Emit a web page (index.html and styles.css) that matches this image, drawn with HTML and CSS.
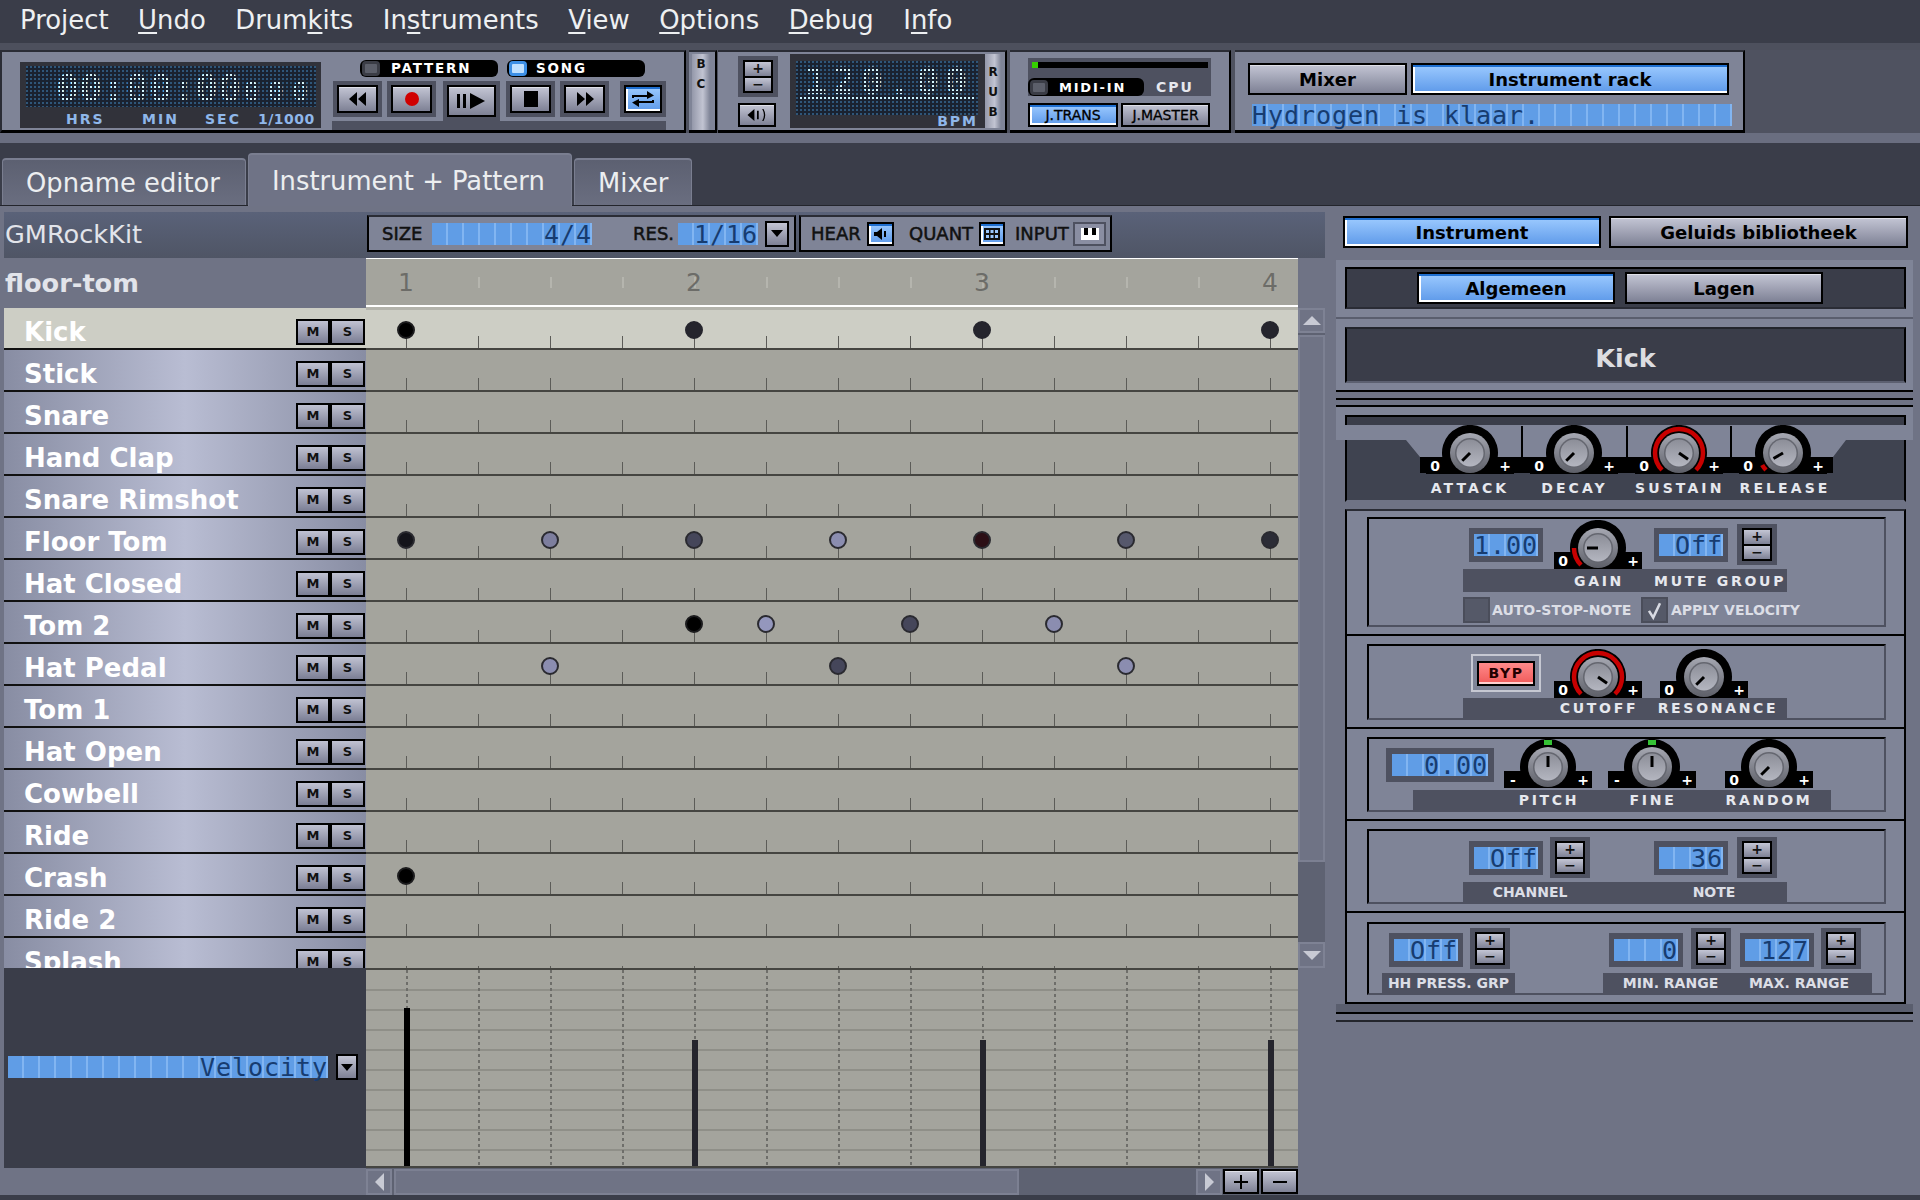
FILE: index.html
```html
<!DOCTYPE html>
<html lang="nl">
<head>
<meta charset="utf-8">
<title>Hydrogen</title>
<link rel="stylesheet" href="styles.css">
</head>
<body>
<svg class="defs" aria-hidden="true">
  <defs>
    <linearGradient id="kg1" x1="0" y1="0" x2="0" y2="1"><stop offset="0" stop-color="#a6a8b2"/><stop offset="1" stop-color="#5d5f68"/></linearGradient>
    <linearGradient id="kg2" x1="0" y1="0" x2="0" y2="1"><stop offset="0" stop-color="#8c8e98"/><stop offset="1" stop-color="#b4b6c0"/></linearGradient>
    <symbol id="kb" viewBox="0 0 88 49">
      <path d="M0 32H16.3A28 28 0 1 1 71.7 32H88V49H0Z" fill="#000"/>
      <circle cx="44" cy="28" r="20" fill="url(#kg1)"/>
      <circle cx="44" cy="28" r="15" fill="#64666f"/>
      <circle cx="44" cy="28" r="13.5" fill="url(#kg2)"/>
    </symbol>
  </defs>
</svg>

<nav class="menu">
  <span>Project</span><span><u>U</u>ndo</span><span>Drum<u>k</u>its</span><span>In<u>s</u>truments</span><span><u>V</u>iew</span><span><u>O</u>ptions</span><span><u>D</u>ebug</span><span>I<u>n</u>fo</span>
</nav>
<div class="menu-band"></div>

<header class="toolbar">
  <section class="tb tb-time">
    <div class="timelcd">
      <div class="dots timedots"><span class="bigd">00:00:00</span><span class="smalld">000</span></div>
      <div class="timelabels"><span class="t1">HRS</span><span class="t2">MIN</span><span class="t3">SEC</span><span class="t4">1/1000</span></div>
    </div>
    <div class="transport">
      <div class="pills">
        <div class="pill"><i class="led"></i><span class="pilltxt">PATTERN</span></div>
        <div class="pill"><i class="led on"></i><span class="pilltxt p-song">SONG</span></div>
      </div>
      <div class="tbtns">
        <div class="tw"><div class="btn tb41"><svg viewBox="0 0 24 20" class="ti"><path d="M11 3V17L3 10ZM20 3V17L12 10Z"/></svg></div></div>
        <div class="tw"><div class="btn tb41"><svg viewBox="0 0 24 20" class="ti"><ellipse cx="12" cy="10" rx="7" ry="7" fill="#d00000"/></svg></div></div>
        <div class="tw tw-play"><div class="btn tb49"><svg viewBox="0 0 36 20" class="ti ti36"><path d="M3 3H6V17H3ZM9 3H12V17H9ZM16 2V18L31 10Z"/></svg></div></div>
        <div class="tw"><div class="btn tb41"><svg viewBox="0 0 24 20" class="ti"><path d="M5 2H19V18H5Z"/></svg></div></div>
        <div class="tw"><div class="btn tb41"><svg viewBox="0 0 24 20" class="ti"><path d="M4 3V17L12 10ZM13 3V17L21 10Z"/></svg></div></div>
        <div class="tw tw-loop"><div class="btn on tb38"><svg viewBox="0 0 28 22" class="ti ti28"><path d="M3 10V7H18V3L25 7.500 18 11V9H5V10ZM25 12V15H10V19L3 14.500 10 11V13H23V12Z"/></svg></div></div>
      </div>
      <div class="tbar"></div>
    </div>
  </section>
  <section class="tb strip-bc"><div class="vstrip"><span>B</span><span>C</span></div></section>
  <section class="tb tb-tempo">
    <div class="tempo-ctl">
      <div class="spin spin-t"><b>+</b><b>−</b></div>
      <div class="btn spk"><svg viewBox="0 0 30 20" class="ti ti28"><path d="M4 10L12 3V17ZM15 5V15H17V5ZM21 3Q25 10 21 17L22.500 17Q26.500 10 22.500 3Z"/></svg></div>
    </div>
    <div class="bpmlcd">
      <div class="dots bpmdots"><span class="bpmtxt">120.00</span><i class="dotline"></i></div>
      <div class="bpmlab">BPM</div>
    </div>
    <div class="vstrip rub"><span>R</span><span>U</span><span>B</span></div>
  </section>
  <section class="tb tb-midi">
    <div class="cpubox">
      <div class="cpubar"><i></i></div>
      <div class="midirow"><div class="pill midipill"><i class="led"></i><span class="pilltxt">MIDI-IN</span></div><span class="cputxt">CPU</span></div>
    </div>
    <div class="jrow"><div class="btn on jb1">J.TRANS</div><div class="btn jb2">J.MASTER</div></div>
  </section>
  <section class="tb tb-mon">
    <div class="monbtns"><div class="btn bt mixb">Mixer</div><div class="btn on bt rackb">Instrument rack</div></div>
    <div class="lcd l480">Hydrogen is klaar.</div>
  </section>
</header>
<div class="tool-band"></div>
<div class="tool-gap"></div>

<div class="tabs">
  <div class="tab t-a">Opname editor</div>
  <div class="tab act t-b">Instrument + Pattern</div>
  <div class="tab t-c">Mixer</div>
</div>

<main class="main">
  <div class="editor">
    <div class="kitname">GMRockKit</div>
    <div class="ptb">
      <div class="ptp ptp1">
        <span class="pl w42 ml15">SIZE</span><div class="lcd l160 r ml8">4/4</div>
        <span class="pl w42 ml41">RES.</span><div class="lcd l80 r ml3">1/16</div>
        <div class="drop ml7"><i></i></div>
      </div>
      <div class="ptp ptp2">
        <span class="pl w49 ml12">HEAR</span>
        <div class="btn on ib w27 ml7"><svg viewBox="0 0 20 16"><path d="M3 6H6L11 2V14L6 10H3ZM13 5V11H15V5Z"/></svg></div>
        <span class="pl w65 ml15">QUANT</span>
        <div class="btn on ib w26 ml5"><svg viewBox="0 0 20 16"><path d="M2 2H18V14H2Z"/><path d="M4 4H7V7H4ZM8.500 4H11.500V7H8.500ZM13 4H16V7H13ZM4 9H7V12H4ZM8.500 9H11.500V12H8.500ZM13 9H16V12H13Z"/></svg></div>
        <span class="pl w53 ml10">INPUT</span>
        <div class="inp ml5"><svg viewBox="0 0 24 16"><path d="M3 2H21V14H3Z" fill="#fff"/><path d="M6 2H10V9H6ZM14 2H18V9H14Z" fill="#000"/></svg></div>
      </div>
    </div>

    <div class="sel-name">floor-tom</div>
    <div class="ruler gcols">
      <span class="c0">1</span><span class="c4">2</span><span class="c8">3</span><span class="c12">4</span>
    </div>
    <div class="ruler-end"></div>

    <div class="ilist">
      <div class="irow sel"><span class="iname">Kick</span><span class="ms">M</span><span class="ms">S</span></div>
      <div class="irow"><span class="iname">Stick</span><span class="ms">M</span><span class="ms">S</span></div>
      <div class="irow"><span class="iname">Snare</span><span class="ms">M</span><span class="ms">S</span></div>
      <div class="irow"><span class="iname">Hand Clap</span><span class="ms">M</span><span class="ms">S</span></div>
      <div class="irow"><span class="iname">Snare Rimshot</span><span class="ms">M</span><span class="ms">S</span></div>
      <div class="irow"><span class="iname">Floor Tom</span><span class="ms">M</span><span class="ms">S</span></div>
      <div class="irow"><span class="iname">Hat Closed</span><span class="ms">M</span><span class="ms">S</span></div>
      <div class="irow"><span class="iname">Tom 2</span><span class="ms">M</span><span class="ms">S</span></div>
      <div class="irow"><span class="iname">Hat Pedal</span><span class="ms">M</span><span class="ms">S</span></div>
      <div class="irow"><span class="iname">Tom 1</span><span class="ms">M</span><span class="ms">S</span></div>
      <div class="irow"><span class="iname">Hat Open</span><span class="ms">M</span><span class="ms">S</span></div>
      <div class="irow"><span class="iname">Cowbell</span><span class="ms">M</span><span class="ms">S</span></div>
      <div class="irow"><span class="iname">Ride</span><span class="ms">M</span><span class="ms">S</span></div>
      <div class="irow"><span class="iname">Crash</span><span class="ms">M</span><span class="ms">S</span></div>
      <div class="irow"><span class="iname">Ride 2</span><span class="ms">M</span><span class="ms">S</span></div>
      <div class="irow"><span class="iname">Splash</span><span class="ms">M</span><span class="ms">S</span></div>
    </div>

    <div class="pgrid">
      <div class="grow gcols sel"><i class="note k0 c0"></i><i class="note k1 c4"></i><i class="note k1 c8"></i><i class="note k1 c12"></i></div>
      <div class="grow gcols"></div>
      <div class="grow gcols"></div>
      <div class="grow gcols"></div>
      <div class="grow gcols"></div>
      <div class="grow gcols"><i class="note k2 c0"></i><i class="note k5 c2"></i><i class="note k4 c4"></i><i class="note k6 c6"></i><i class="note k7 c8"></i><i class="note k8 c10"></i><i class="note k3 c12"></i></div>
      <div class="grow gcols"></div>
      <div class="grow gcols"><i class="note k0 c4"></i><i class="note k9 c5"></i><i class="note k4 c7"></i><i class="note k6 c9"></i></div>
      <div class="grow gcols"><i class="note k6 c2"></i><i class="note k4 c6"></i><i class="note k6 c10"></i></div>
      <div class="grow gcols"></div>
      <div class="grow gcols"></div>
      <div class="grow gcols"></div>
      <div class="grow gcols"></div>
      <div class="grow gcols"><i class="note k0 c0"></i></div>
      <div class="grow gcols"></div>
      <div class="grow gcols"></div>
    </div>

    <div class="vscroll">
      <div class="sb-btn"><i class="tri up"></i></div>
      <div class="sb-thumb vt"></div>
      <div class="sb-track vtr"></div>
      <div class="sb-btn"><i class="tri down"></i></div>
    </div>

    <div class="velleft">
      <div class="lcd l320 r">Velocity</div>
      <div class="drop ml8 velr"><i></i></div>
    </div>
    <div class="velgrid gcols">
      <i class="vcol c0"><b class="bar hi black"></b></i><i class="vcol c1"></i><i class="vcol c2"></i><i class="vcol c3"></i>
      <i class="vcol c4"><b class="bar"></b></i><i class="vcol c5"></i><i class="vcol c6"></i><i class="vcol c7"></i>
      <i class="vcol c8"><b class="bar"></b></i><i class="vcol c9"></i><i class="vcol c10"></i><i class="vcol c11"></i>
      <i class="vcol c12"><b class="bar"></b></i>
    </div>
    <div></div>

    <div></div>
    <div class="hscroll">
      <div class="sb-btn hb"><i class="tri t-left"></i></div>
      <div class="sb-thumb ht"></div>
      <div class="sb-track htr"></div>
      <div class="sb-btn hb hb-r"><i class="tri t-right"></i></div>
      <div class="btn zoomb z1"><svg viewBox="0 0 20 20"><path d="M9 3H11V9H17V11H11V17H9V11H3V9H9Z"/></svg></div>
      <div class="btn zoomb z2"><svg viewBox="0 0 20 20"><path d="M3 9H17V11H3Z"/></svg></div>
    </div>
  </div>

  <aside class="rcol">
    <div class="rbtns"><div class="btn on bt ib258">Instrument</div><div class="btn bt ib299">Geluids bibliotheek</div></div>
    <div class="rack">
      <div class="rhead"><div class="rhead-in"><div class="btn on bt ib197">Algemeen</div><div class="btn bt ib198">Lagen</div></div></div>
      <div class="rname"><div class="rname-in">Kick</div></div>
      <div class="rrule"></div>
      <div class="env">
        <div class="env-top"></div>
        <div class="env-body">
          <div class="env-knobs">
            <svg class="knob" viewBox="0 0 88 49"><use href="#kb"/><line class="ptr" x1="44" y1="28" x2="44" y2="17" transform="rotate(-135 44 28)"/><text class="kl" x="9" y="46">0</text><text class="kl" x="79" y="46">+</text></svg>
            <i class="envsep"></i>
            <svg class="knob" viewBox="0 0 88 49"><use href="#kb"/><line class="ptr" x1="44" y1="28" x2="44" y2="17" transform="rotate(-135 44 28)"/><text class="kl" x="9" y="46">0</text><text class="kl" x="79" y="46">+</text></svg>
            <i class="envsep s2"></i>
            <svg class="knob" viewBox="0 0 88 49"><use href="#kb"/><path class="arc" d="M27 45A24 24 0 1 1 61 45"/><line class="ptr" x1="44" y1="28" x2="44" y2="17" transform="rotate(125 44 28)"/><text class="kl" x="9" y="46">0</text><text class="kl" x="79" y="46">+</text></svg>
            <i class="envsep"></i>
            <svg class="knob" viewBox="0 0 88 49"><use href="#kb"/><path class="arc" d="M27 45A24 24 0 0 1 23.200 40"/><line class="ptr" x1="44" y1="28" x2="44" y2="17" transform="rotate(-120 44 28)"/><text class="kl" x="9" y="46">0</text><text class="kl" x="79" y="46">+</text></svg>
          </div>
          <div class="env-labels"><span class="px">ATTACK</span><span class="px">DECAY</span><span class="px">SUSTAIN</span><span class="px">RELEASE</span></div>
        </div>
      </div>
      <div class="racks">
        <div class="rp rp1"><div class="ri ri1">
          <div class="prow mt1">
            <div class="lb l-s ml100 mt8"><div class="lcd l64 r">1.00</div></div>
            <svg class="knob ml11" viewBox="0 0 88 49"><use href="#kb"/><path class="arc" d="M27 45A24 24 0 0 1 20 28"/><line class="ptr" x1="44" y1="28" x2="44" y2="17" transform="rotate(-90 44 28)"/><text class="kl" x="9" y="46">0</text><text class="kl" x="79" y="46">+</text></svg>
            <div class="lb l-s ml12 mt8"><div class="lcd l64 r">Off</div></div>
            <div class="spin ml9 mt4"><b>+</b><b>−</b></div>
          </div>
          <div class="lbar ml94 w324 h23 pl81"><span class="px w110">GAIN</span><span class="px w128">MUTE GROUP</span></div>
          <div class="chk">
            <i class="cb ml94"></i><span class="st w151">AUTO-STOP-NOTE</span>
            <i class="cb"><svg viewBox="0 0 27 26"><path d="M7 14L12 22L20 5" fill="none" stroke="#d8dae2" stroke-width="3"/></svg></i><span class="st ml3">APPLY VELOCITY</span>
          </div>
        </div></div>

        <div class="rp rp2"><div class="ri ri2">
          <div class="prow">
            <div class="byp ml102 mt8"><span>BYP</span></div>
            <svg class="knob ml13 mt3" viewBox="0 0 88 49"><use href="#kb"/><path class="arc" d="M27 45A24 24 0 1 1 61 45"/><line class="ptr" x1="44" y1="28" x2="44" y2="17" transform="rotate(125 44 28)"/><text class="kl" x="9" y="46">0</text><text class="kl" x="79" y="46">+</text></svg>
            <svg class="knob ml18 mt3" viewBox="0 0 88 49"><use href="#kb"/><line class="ptr" x1="44" y1="28" x2="44" y2="17" transform="rotate(-135 44 28)"/><text class="kl" x="9" y="46">0</text><text class="kl" x="79" y="46">+</text></svg>
          </div>
          <div class="lbar ml94 w324 h20 pl81"><span class="px w110">CUTOFF</span><span class="px w128">RESONANCE</span></div>
        </div></div>

        <div class="rp rp3"><div class="ri ri3">
          <div class="prow p49">
            <div class="lb l-w ml17 mt9"><div class="lcd l96 r">0.00</div></div>
            <svg class="knob ml10" viewBox="0 0 88 49"><use href="#kb"/><rect x="40" y="1" width="8" height="5" fill="#35c235"/><line class="ptr" x1="44" y1="28" x2="44" y2="17"/><text class="kl" x="9" y="46">-</text><text class="kl" x="79" y="46">+</text></svg>
            <svg class="knob ml16" viewBox="0 0 88 49"><use href="#kb"/><rect x="40" y="1" width="8" height="5" fill="#35c235"/><line class="ptr" x1="44" y1="28" x2="44" y2="17"/><text class="kl" x="9" y="46">-</text><text class="kl" x="79" y="46">+</text></svg>
            <svg class="knob ml29" viewBox="0 0 88 49"><use href="#kb"/><line class="ptr" x1="44" y1="28" x2="44" y2="17" transform="rotate(-135 44 28)"/><text class="kl" x="9" y="46">0</text><text class="kl" x="79" y="46">+</text></svg>
          </div>
          <div class="lbar ml44 w418 h20 mt2 pl84"><span class="px w104">PITCH</span><span class="px w104">FINE</span><span class="px w120 ml4">RANDOM</span></div>
        </div></div>

        <div class="rp rp4"><div class="ri ri4">
          <div class="prow p46">
            <div class="lb l-s ml100 mt10"><div class="lcd l64 r">Off</div></div>
            <div class="spin ml7 mt6"><b>+</b><b>−</b></div>
            <div class="lb l-s ml64 mt10"><div class="lcd l64 r">36</div></div>
            <div class="spin ml9 mt6"><b>+</b><b>−</b></div>
          </div>
          <div class="lbar ml94 w324 h20 mt5"><span class="st w134 tc">CHANNEL</span><span class="st w148 ml43 tc">NOTE</span></div>
        </div></div>

        <div class="rp rp5"><div class="ri ri5">
          <div class="prow p45">
            <div class="lb l-s ml20 mt9"><div class="lcd l64 r">Off</div></div>
            <div class="spin ml7 mt4"><b>+</b><b>−</b></div>
            <div class="lb l-s ml99 mt9"><div class="lcd l64 r">0</div></div>
            <div class="spin ml8 mt4"><b>+</b><b>−</b></div>
            <div class="lb l-s ml9 mt9"><div class="lcd l64 r">127</div></div>
            <div class="spin ml7 mt4"><b>+</b><b>−</b></div>
          </div>
          <div class="barrow mt4">
            <div class="lbar ml13 w133 h20"><span class="st w133 tc">HH PRESS. GRP</span></div>
            <div class="lbar ml88 w269 h20"><span class="st w135 tc">MIN. RANGE</span><span class="st w122 tc">MAX. RANGE</span></div>
          </div>
        </div></div>
      </div>
      <div class="rfoot"></div>
    </div>
  </aside>
</main>
<div class="bottom"></div>
</body>
</html>
```

FILE: styles.css
```css
* { box-sizing: border-box; }
html, body { margin: 0; padding: 0; }
body { width: 1920px; height: 1200px; overflow: hidden; background: #3a3d49; font-family: "DejaVu Sans", sans-serif; color: #111; display: flex; flex-direction: column; }
i, b { font-style: normal; display: block; }
.defs { display: block; width: 0; height: 0; flex: none; }

/* margins */
.ml3{margin-left:3px}.ml4{margin-left:4px}.ml5{margin-left:5px}.ml7{margin-left:7px}.ml8{margin-left:8px}.ml9{margin-left:9px}.ml10{margin-left:10px}.ml11{margin-left:11px}.ml12{margin-left:12px}.ml13{margin-left:13px}.ml15{margin-left:15px}.ml16{margin-left:16px}.ml17{margin-left:17px}.ml18{margin-left:18px}.ml20{margin-left:20px}.ml29{margin-left:29px}.ml41{margin-left:41px}.ml43{margin-left:43px}.ml44{margin-left:44px}.ml64{margin-left:64px}.ml88{margin-left:88px}.ml94{margin-left:94px}.ml99{margin-left:99px}.ml100{margin-left:100px}.ml102{margin-left:102px}
.mt1{margin-top:1px}.mt2{margin-top:2px}.mt3{margin-top:3px}.mt4{margin-top:4px}.mt5{margin-top:5px}.mt6{margin-top:6px}.mt8{margin-top:8px}.mt9{margin-top:9px}.mt10{margin-top:10px}
.w26{width:26px}.w27{width:27px}.w42{width:42px}.w49{width:49px}.w53{width:53px}.w65{width:65px}.w104{width:104px}.w110{width:110px}.w120{width:120px}.w122{width:122px}.w128{width:128px}.w133{width:133px}.w134{width:134px}.w135{width:135px}.w148{width:148px}.w151{width:151px}.w269{width:269px}.w324{width:324px}.w418{width:418px}
.h20{height:20px}.h23{height:23px}.tc{text-align:center}

/* menu */
.menu { height: 43px; flex: none; display: flex; align-items: center; padding: 0 0 3px 20px; background: #3a3d49; color: #eef0f2; font-size: 25.900px; gap: 29.500px; }
.menu u { text-decoration-thickness: 2px; text-underline-offset: 3px; }
.menu-band { height: 7px; flex: none; background: #4d505d; }

/* toolbar */
.toolbar { height: 83px; flex: none; display: flex; background: #4f5260; }
.tb { background: #7f8497; border-top: 2px solid #2a2c35; border-bottom: 3px solid #000; border-right: 2px solid #000; height: 83px; display: flex; }
.tool-band { height: 10px; flex: none; background: #6a6e80; }
.tool-gap { height: 10px; flex: none; background: #3a3d49; }
.tb-time { width: 686px; padding: 10px 0 0 20px; border-left: 2px solid #2a2c35; padding-left: 18px; }
.timelcd { width: 301px; height: 66px; background: #31323a; padding: 4px 5px 0 6px; flex: none; }
.dots { position: relative; background: #2f5679; color: #d4f6ff; font-family: "DejaVu Sans Mono", monospace; font-weight: bold; }
.dots::after { content: ""; position: absolute; inset: 0; background-image: linear-gradient(90deg, transparent 0 2px, #1a2230 2px 4px), linear-gradient(transparent 0 2px, #1a2230 2px 4px); background-size: 4px 4px; }
.timedots { height: 41px; width: 290px; padding: 3px 0 0 30px; display: flex; align-items: baseline; line-height: 38px; white-space: pre; }
.bigd { font-size: 38px; width: 186px; letter-spacing: .3px; }
.smalld { font-size: 27px; letter-spacing: 8px; margin-left: 2px; }
.timelabels { display: flex; color: #8fb7ea; font-weight: bold; font-size: 14px; letter-spacing: 2px; line-height: 12px; margin-top: 6px; height: 14px; }
.t1 { margin-left: 40px; width: 76px; } .t2 { width: 63px; } .t3 { width: 53px; } .t4 { letter-spacing: .5px; }

.transport { width: 334px; margin: -2px 0 0 11px; }
.pills { display: flex; gap: 9px; margin-left: 28px; }
.pill { width: 138px; height: 17px; background: #000; border-radius: 6px; display: flex; align-items: center; padding-left: 2px; }
.led { width: 18px; height: 15px; background: #5c5f6a; border-radius: 4px; border: 3px solid #3b3d46; flex: none; }
.led.on { background: #bfe0ff; border-color: #3c8fe6; }
.pilltxt { color: #fff; font-size: 13.500px; font-weight: bold; letter-spacing: 1.800px; margin-left: 11px; line-height: 15px; }
.p-song { margin-left: 9px; }
.tbtns { display: flex; margin-top: 4px; height: 36px; align-items: flex-start; }
.tw { padding: 4px; background: #4e5160; height: 36px; margin-left: 5px; }
.tw:first-child { margin-left: 1px; }
.tw-play { height: 40px; margin-left: 7px; margin-right: 1px; }
.tw-loop { margin-left: 11px; }
.ti { display: block; width: 24px; height: 20px; fill: #000; }
.ti36 { width: 36px; }
.ti28 { width: 28px; height: 22px; }
.btn { border: 2px solid #000; background: linear-gradient(#c3c5d4, #7e8195); box-shadow: inset 0 1px 0 #dfe0e8; display: flex; align-items: center; justify-content: center; color: #000; }
.btn.on { background: linear-gradient(#9ccaff, #5d99e9); box-shadow: inset 0 2px 0 #1f6fd0, inset 0 -2px 0 #fff, inset 2px 0 0 #fff; }
.tb41 { width: 41px; height: 28px; }
.tb49 { width: 49px; height: 32px; }
.tb38 { width: 38px; height: 28px; }
.tbar { height: 9px; background: #4e5160; margin-top: 4px; }

.strip-bc { width: 28px; margin-left: 3px; padding: 2px 5px 0 3px; }
.vstrip { width: 18px; height: 76px; background: linear-gradient(90deg, #9498aa, #c2c4d2 60%, #7f8497); display: flex; flex-direction: column; align-items: center; font-weight: bold; font-size: 12px; color: #111; }
.vstrip span { height: 20px; line-height: 20px; }
.tb-tempo { width: 289px; margin-left: 1px; padding-left: 20px; }
.tempo-ctl { width: 40px; margin-top: 4px; }
.spin-t { height: 41px; }
.spin { width: 40px; height: 41px; background: #4e5160; padding: 4px 5px; flex: none; display: flex; flex-direction: column; }
.spin b { flex: 1; min-height: 0; border: 2px solid #000; background: linear-gradient(#c3c5d4, #7e8195); text-align: center; font-size: 14px; line-height: 12px; color: #111; }
.spin b + b { border-top: 0; }
.spk { width: 38px; height: 24px; margin-top: 6px; }
.spk .ti { width: 26px; height: 18px; }
.bpmlcd { width: 195px; height: 74px; background: #31323a; margin: 2px 0 0 12px; padding: 4px 7px 0 6px; flex: none; }
.bpmdots { height: 54px; padding: 0 0 0 8px; }
.bpmtxt { font-size: 38px; letter-spacing: 5.200px; line-height: 40px; display: block; margin-top: 3px; white-space: pre; height: 40px; }
.dotline { height: 2px; background: #c9f2ff; margin: -4px 4px 0 -4px; }
.bpmlab { color: #8fb7ea; font-weight: bold; font-size: 14px; letter-spacing: 2px; text-align: right; line-height: 12px; margin-top: 0; }
.rub { margin: 2px 0 0 0; height: 74px; width: 16px; padding-top: 8px; }
.tb-midi { width: 221px; margin-left: 3px; flex-direction: column; padding: 6px 0 0 18px; }
.cpubox { width: 183px; height: 38px; background: #4e5160; padding: 4px; }
.cpubar { height: 6px; width: 176px; background: #000; }
.cpubar i { width: 6px; height: 6px; background: #35d000; }
.midirow { display: flex; align-items: center; margin: 10px 0 0 -4px; }
.midipill { width: 116px; height: 18px; }
.midipill .pilltxt { font-size: 13px; }
.cputxt { color: #e6e8ee; font-size: 14px; font-weight: bold; letter-spacing: 2px; margin-left: 12px; }
.jrow { display: flex; gap: 3px; margin-top: 7px; }
.jb1 { width: 90px; height: 24px; font-size: 14px; -webkit-text-stroke: .3px #000; }
.jb2 { width: 89px; height: 24px; font-size: 14px; -webkit-text-stroke: .3px #000; }
.tb-mon { width: 510px; margin-left: 4px; flex-direction: column; padding: 11px 0 0 13px; border-top-width: 2px; }
.monbtns { display: flex; gap: 4px; height: 32px; }
.bt { font-weight: bold; font-size: 18px; }
.mixb { width: 159px; } .rackb { width: 318px; }
.tb-mon .lcd { margin: 9px 0 0 4px; }

.lcd { height: 22px; background: repeating-linear-gradient(90deg, #609de6 0 14px, #82b5f1 14px 16px); color: #173c70; font-family: "DejaVu Sans Mono", monospace; font-size: 25px; letter-spacing: .95px; line-height: 23px; white-space: pre; flex: none; }
.lcd.r { text-align: right; }
.l64 { width: 64px; } .l80 { width: 80px; } .l96 { width: 96px; } .l160 { width: 160px; } .l320 { width: 320px; } .l480 { width: 480px; }

/* tabs */
.tabs { height: 53px; flex: none; display: flex; align-items: flex-end; padding-left: 2px; gap: 2px; border-bottom: 1px solid #23252c; }
.tab { height: 47px; background: linear-gradient(#5c6071, #6a6e80); border-top: 2px solid #7a7e90; border-left: 1px solid #7a7e90; border-right: 1px solid #7a7e90; border-radius: 4px 4px 0 0; color: #eceef0; font-size: 25.800px; padding: 5px 0 0 23px; line-height: 36px; }
.tab.act { height: 53px; margin-bottom: -1px; background: #6f7386; padding-top: 8px; position: relative; }
.t-a { width: 244px; } .t-b { width: 324px; } .t-c { width: 118px; }

/* main */
.main { height: 989px; flex: none; display: flex; background: #6f7385; }
.editor { margin: 4px 0 0 4px; width: 1321px; display: grid; grid-template-columns: 362px 932px 27px; grid-template-rows: 48px 50px 660px 200px 27px; }
.kitname { margin-top: 2px; background: linear-gradient(#5a6279, #4f5565); color: #e2e4ea; font-size: 25.600px; padding-left: 1px; line-height: 44px; }
.ptb { grid-column: 2 / 4; margin-top: 2px; background: linear-gradient(#5a6279, #4f5565); display: flex; padding: 3px 0 0 1px; gap: 3px; }
.ptp { height: 37px; background: #7f8497; border: 2px solid #000; border-top-color: #2a2c35; display: flex; align-items: center; color: #111; }
.ptp > * { flex: none; }
.ptp1 { width: 429px; } .ptp2 { width: 313px; }
.ptp1 > :first-child { margin-left: 13px; }
.ptp2 > :first-child { margin-left: 10px; }
.pl { font-size: 18px; -webkit-text-stroke: .5px #111; white-space: nowrap; }
.drop { width: 24px; height: 26px; border: 2px solid #000; background: linear-gradient(#c3c5d4, #7e8195); display: flex; align-items: center; justify-content: center; flex: none; }
.drop i { width: 0; height: 0; border-left: 6px solid transparent; border-right: 6px solid transparent; border-top: 7px solid #000; }
.ib { height: 24px; }
.ib svg { width: 20px; height: 16px; }
.ib path { fill: #000; }
.w26 svg path:first-child { fill: #111; }
.w26 svg path:last-child { fill: #9cc8ff; }
.inp { width: 33px; height: 24px; background: #8a8ea2; border: 2px solid #4e5160; display: flex; align-items: center; justify-content: center; }
.inp svg { width: 24px; height: 16px; }

.sel-name { background: #6f7385; color: #e2e4ea; font-weight: bold; font-size: 25.600px; padding-left: 1px; line-height: 50px; }
.gcols { display: grid; grid-template-columns: 4px repeat(13, 72px); grid-template-rows: 1fr; overflow: hidden; }
.gcols > * { grid-row: 1; }
.c0{grid-column:2}.c1{grid-column:3}.c2{grid-column:4}.c3{grid-column:5}.c4{grid-column:6}.c5{grid-column:7}.c6{grid-column:8}.c7{grid-column:9}.c8{grid-column:10}.c9{grid-column:11}.c10{grid-column:12}.c11{grid-column:13}.c12{grid-column:14}
.ruler { border-top: 1px solid #fff; border-bottom: 1px solid #b3b3ab; box-shadow: inset 0 -2px 0 #fff; background: repeating-linear-gradient(90deg, #b5b5ae 0 2px, transparent 2px 72px) 40px 18px / 100% 11px no-repeat, #a4a49d; }
.ruler span { font-size: 25px; color: #6c6c68; text-align: center; align-self: center; margin-bottom: 2px; }
.ruler-end { background: #6f7385; }

.ilist { overflow: hidden; }
.irow { height: 42px; display: flex; align-items: flex-end; border-bottom: 2px solid #111; background: linear-gradient(90deg, #888da3, #b9bdd3 50%, #888da3); padding: 0 1px 3px 20px; }
.irow.sel { background: #cdcec5; }
.iname { color: #fff; font-weight: bold; font-size: 26px; line-height: 32px; margin: 0 auto -3px 0; white-space: nowrap; }
.ms { width: 34px; height: 26px; border: 2px solid #000; background: linear-gradient(#c0c2d2, #7b7e94); font-size: 13px; font-weight: bold; text-align: center; line-height: 22px; color: #111; flex: none; margin-left: 1px; }
.ms:last-child { width: 35px; margin-left: 0; }

.pgrid { overflow: hidden; background: #a4a49d; }
.grow { height: 42px; border-bottom: 2px solid #454541; background: repeating-linear-gradient(90deg, #5c5c58 0 1px, transparent 1px 72px) 40px 100% / 100% 12px no-repeat, #a4a49d; }
.grow.sel { background: repeating-linear-gradient(90deg, #5c5c58 0 1px, transparent 1px 72px) 40px 100% / 100% 12px no-repeat, #cdcec5; box-shadow: inset 0 2px 0 #b3b3ab; }
.note { width: 18px; height: 18px; border-radius: 50%; border: 2px solid #2a2a30; justify-self: center; align-self: start; margin-top: 13px; }
.k0 { background: #000; border-color: #1c1c1e; }
.k1 { background: #25252d; border-color: #25252d; }
.k2 { background: #14141a; }
.k3 { background: #2b2c36; }
.k4 { background: #45465a; }
.k5 { background: #7d7e9e; }
.k6 { background: #8b8db0; }
.k7 { background: #2c0f16; }
.k8 { background: #56586c; }
.k9 { background: #9497bd; }

.vscroll { display: flex; flex-direction: column; background: #5e6272; }
.sb-btn { height: 26px; background: #6f7385; border: 2px solid #7e8294; display: flex; align-items: center; justify-content: center; flex: none; }
.vscroll .sb-btn { width: 27px; }
.vscroll .sb-btn:first-child { height: 25px; margin-bottom: 2px; }
.sb-thumb { background: #6f7385; border: 2px solid #7c8092; }
.sb-track { background: #5e6272; }
.vt { height: 527px; flex: none; }
.vtr { height: 80px; flex: none; }
.tri { width: 0; height: 0; }
.tri.up { border-left: 9px solid transparent; border-right: 9px solid transparent; border-bottom: 9px solid #c8cad4; }
.tri.down { border-left: 9px solid transparent; border-right: 9px solid transparent; border-top: 9px solid #c8cad4; }
.tri.t-left { border-top: 9px solid transparent; border-bottom: 9px solid transparent; border-right: 9px solid #c8cad4; }
.tri.t-right { border-top: 9px solid transparent; border-bottom: 9px solid transparent; border-left: 9px solid #c8cad4; }

.velleft { background: #3a3d49; display: flex; align-items: flex-start; padding: 88px 0 0 4px; }
.velr { width: 22px; margin-top: -2px; }
.velgrid { background: repeating-linear-gradient(#a4a49d 0 18px, #8f8f88 18px 20px) 0 1px, #a4a49d; border-bottom: 2px solid #454541; border-top: 2px solid #454541; }
.vcol { width: 2px; justify-self: center; margin-left: 1px; display: flex; align-items: flex-end; justify-content: center; background: repeating-linear-gradient(#6e6e6a 0 3px, transparent 3px 6px); }
.bar { width: 6px; height: 126px; flex: none; background: #25252d; }
.bar.hi { height: 158px; }
.bar.black { background: #000; }

.hscroll { grid-column: 2 / 4; display: flex; height: 27px; padding-top: 1px; width: 932px; background: #5e6272; }
.hb { width: 26px; height: 26px; }
.ht { width: 625px; margin-left: 2px; flex: none; }
.htr { width: 175px; flex: none; }
.hb-r { margin-left: 2px; }
.zoomb { height: 25px; flex: none; }
.zoomb svg { width: 20px; height: 20px; fill: #000; }
.z1 { width: 36px; margin-left: 1px; }
.z2 { width: 37px; margin-left: 2px; }

/* right */
.rcol { margin-left: 11px; width: 577px; flex: none; }
.rbtns { display: flex; gap: 8px; padding: 10px 0 0 7px; }
.ib258 { width: 258px; height: 32px; } .ib299 { width: 299px; height: 32px; }
.rack { margin-top: 12px; }
.rhead { height: 59px; background: #7f8497; padding: 7px 7px 0 9px; border-bottom: 2px solid #5a5e6e; }
.rhead-in { height: 42px; background: #3a3d49; border: 2px solid #000; border-bottom-color: #2a2c35; display: flex; align-items: center; padding-left: 70px; gap: 10px; }
.ib197 { width: 198px; height: 32px; } .ib198 { width: 198px; height: 32px; }
.rname { height: 71px; background: #7f8497; padding: 8px 7px 0 9px; }
.rname-in { height: 56px; background: #3a3d49; border: 2px solid #000; border-top-color: #23252c; border-bottom-color: #5c6070; color: #dcdde0; font-weight: bold; font-size: 25.500px; text-align: center; line-height: 58px; }
.rrule { height: 17px; background: linear-gradient(#000 0 2px, #6f7385 2px 8px, #000 8px 10px, #6f7385 10px 15px, #000 15px 17px); }
.env { height: 95px; background: #6f7385; }
.env-top { height: 18px; background: #7f8497; padding: 8px 7px 0 9px; background-clip: border-box; }
.env-top::before { content: ""; display: block; height: 10px; background: #3a3d49; border: 2px solid #000; border-bottom: 0; }
.env-body { height: 77px; margin-left: 9px; width: 561px; background: #3f4350; border-left: 2px solid #000; border-right: 2px solid #000; border-bottom: 2px solid #6f7385; position: relative; }
.env-body::before { content: ""; position: absolute; left: -11px; right: -9px; top: 0; height: 32px; background: #7f8497; clip-path: polygon(0 0, 100% 0, 100% 15px, 510px 15px, 497px 32px, 84px 32px, 70px 15px, 0 15px); }
.env-knobs { position: relative; display: flex; width: 413px; margin-left: 73px; padding-left: 6px; background: linear-gradient(#000, #000) 0 32px / 100% 16px no-repeat; height: 49px; }
.knob { width: 88px; height: 49px; flex: none; display: block; }
.envsep { width: 2px; height: 31px; background: #000; margin: 1px 7px 0; flex: none; }
.envsep.s2 { margin: 1px 7px 0 8px; }
.arc { fill: none; stroke: #c80000; stroke-width: 4.500; }
.ptr { stroke: #000; stroke-width: 3; }
.kl { fill: #fff; font-family: "DejaVu Sans", sans-serif; font-weight: bold; font-size: 14px; text-anchor: middle; }
.env-labels { position: relative; display: flex; margin: 6px 0 0 79px; gap: 16.500px; }
.env-labels .px { width: 88px; text-align: center; letter-spacing: 3.100px; }
.px { font-weight: bold; font-size: 14px; letter-spacing: 2.700px; color: #e6e8ee; white-space: nowrap; display: block; text-align: center; line-height: 16px; flex: none; }
.st { font-weight: bold; font-size: 14px; color: #dcdee6; white-space: nowrap; line-height: 16px; flex: none; display: block; }
.racks { padding: 7px 7px 0 9px; background: #6f7385; }
.rp { width: 561px; background: #7f8497; border: 2px solid #000; border-top: 0; }
.rp1 { height: 127px; border-top: 2px solid #2a2c35; padding-top: 6px; }
.rp2 { height: 93px; padding-top: 8px; }
.rp3 { height: 92px; padding-top: 8px; }
.rp4 { height: 92px; padding-top: 8px; }
.rp5 { height: 91px; padding-top: 9px; }
.ri { margin-left: 20px; width: 519px; border: 2px solid #000; border-right-color: #4e5160; border-bottom-color: #4e5160; }
.ri1 { height: 110px; } .ri2 { height: 76px; } .ri3 { height: 75px; } .ri4 { height: 75px; } .ri5 { height: 73px; }
.prow { display: flex; align-items: flex-start; }
.prow > * { flex: none; }
.ri2 .prow { height: 52px; }
.p49 { height: 49px; } .p46 { height: 46px; } .p45 { height: 45px; }
.rp1 .prow { height: 49px; }
.lb { height: 34px; background: #4e5160; display: flex; align-items: center; justify-content: center; flex: none; }
.l-s { width: 74px; } .l-w { width: 108px; }
.lbar { background: #4e5160; display: flex; align-items: center; flex: none; }
.pl81 { padding-left: 81px; } .pl84 { padding-left: 84px; }
.chk { display: flex; align-items: center; margin-top: 5px; height: 26px; }
.cb { width: 27px; height: 26px; background: #555968; border: 2px solid #4a4d5a; flex: none; }
.cb svg { display: block; width: 23px; height: 22px; }
.st.w151 { padding-left: 2px; }
.byp { width: 70px; height: 38px; border: 2px solid #c6c8d2; display: flex; align-items: center; justify-content: center; }
.byp span { width: 58px; height: 25px; display: block; background: linear-gradient(#ff8a8a, #f05a5a); border: 2px solid #000; box-shadow: inset 0 -2px 0 #ffd0d0; text-align: center; font-weight: bold; font-size: 14px; letter-spacing: 1.500px; line-height: 20px; color: #220000; }
.barrow { display: flex; }
.rfoot { height: 18px; background: linear-gradient(#5a5e6e 0 8px, #000 8px 10px, #6f7385 10px 16px, #23252c 16px 18px); }
.bottom { height: 5px; flex: none; background: #3a3d49; }
```
